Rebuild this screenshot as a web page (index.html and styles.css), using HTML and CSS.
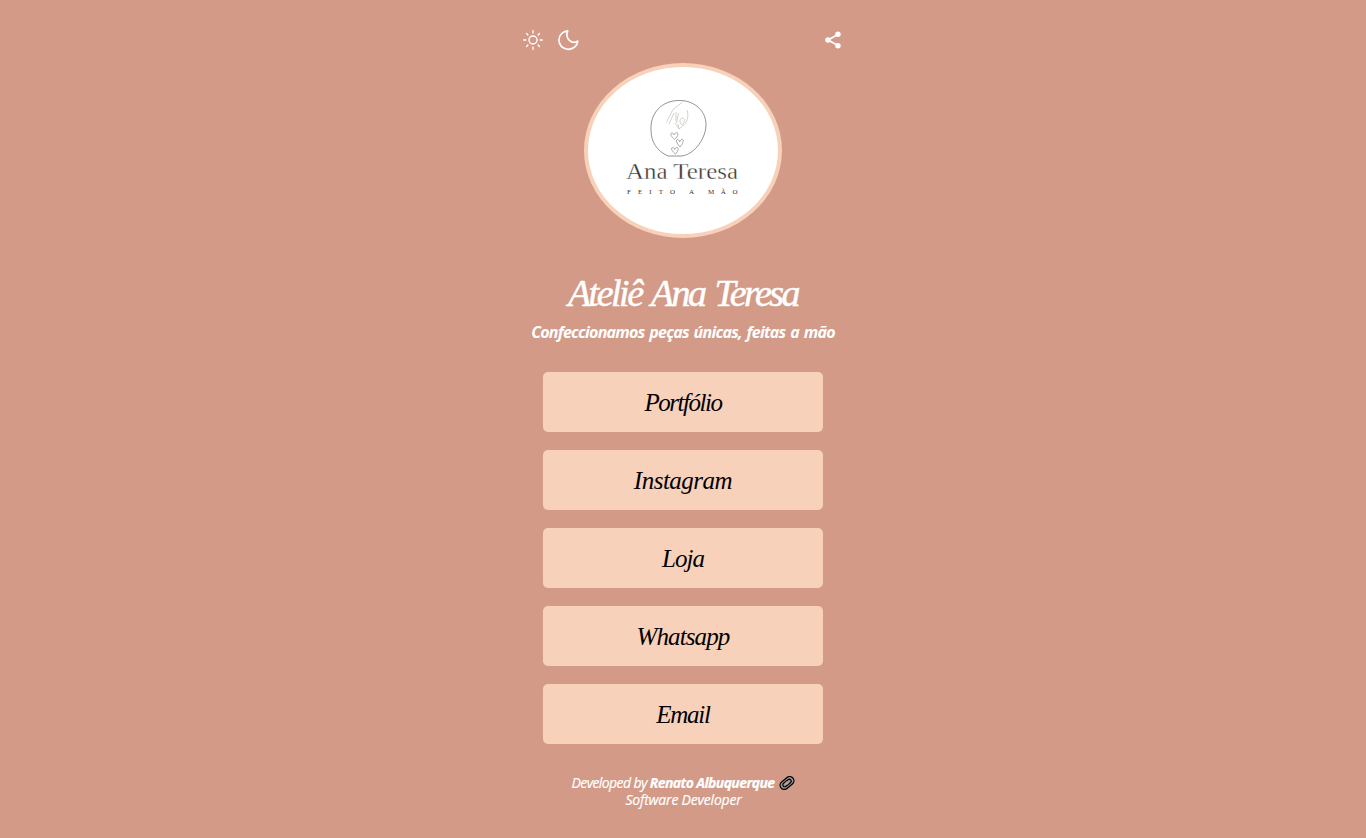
FILE: index.html
```html
<!DOCTYPE html>
<html lang="pt-BR">
<head>
<meta charset="utf-8">
<title>Ateliê Ana Teresa</title>
<link rel="stylesheet" href="styles.css">
</head>
<body>
<main class="page">
  <header class="toolbar">
    <div class="themes">
      <svg class="icon" viewBox="0 0 20 20" fill="none" stroke="currentColor" stroke-width="1.4" stroke-linecap="round"><circle cx="10" cy="10" r="4"/><path d="M10 .7v2.2M10 17.1v2.2M.7 10h2.2M17.1 10h2.2M3.6 3.6l1.3 1.3M15.1 15.1l1.3 1.3M3.600 16.400l1.300-1.300M15.100 4.900l1.300-1.300"/></svg>
      <svg class="icon moon" viewBox="0 0 21 21" fill="none" stroke="currentColor" stroke-width="1.7" stroke-linejoin="round"><path d="M9.700.9C4.800 1.200.9 5.200.9 10.100C.9 15.300 5 19.300 10.200 19.300C15.400 19.300 19.500 15.800 19.800 11C17.500 12.600 14 12.700 11.400 10.400C8.800 8 8.400 4.200 9.700.9Z"/></svg>
    </div>
    <svg class="share" viewBox="0 0 20 20"><path d="M15 4.500 5 10l10 5.500" fill="none" stroke="currentColor" stroke-width="1.700"/><g fill="currentColor"><circle cx="15" cy="4.300" r="2.700"/><circle cx="4.900" cy="10" r="2.700"/><circle cx="15" cy="15.700" r="2.700"/></g></svg>
  </header>
  <div class="avatar">
    <svg viewBox="588 67 190 167" width="190" height="167">
      <path class="ring" d="M679 100.500C693 100 706 110 706 124.500C706 138 695 154 682 156H668C657 151 651 142 651 130C650 113 662 100.500 679 100.500Z"/>
      <path class="hand" d="M683 101.500C679 105 676 107 673 109.500C671 113 669 117 666.500 122.500M674 113L669 124M676 112V121M678.500 113L676.500 123M687 110C689 116 687 122 684 125L679 129L675 123M679 129L678 124M683 118C679 118 679 123 682 125C685 122 685 119 683 118"/>
      <g class="hearts"><path d="M674.500 139.500C672 137 670 134.500 671 133.500C672.500 132 674 134 674 135C675 132.500 677.500 132 678 134C678 136 676 138 674.500 139.500Z"/><path d="M680 147C677.500 144 676 141.500 676.500 140C678 138.500 679.500 140.500 679.700 142C680.500 139 683 138.500 683.300 140.500C683 143 681.500 145.500 680 147Z"/><path d="M675.500 154C673 152 671 149.500 671.500 148.300C673 147 674.500 148 674.700 149.500C675.500 147 678 147 678.300 148.800C678 151 676.500 153 675.500 154Z"/></g>
      <text class="brand" x="626" y="178.500" textLength="112" lengthAdjust="spacingAndGlyphs">Ana Teresa</text>
      <text class="motto" x="627" y="193.700" textLength="48">FEITO</text><text class="motto" x="689" y="193.700">A</text><text class="motto" x="708" y="193.700" textLength="29.500">MÃO</text>
    </svg>
  </div>
  <h1 class="title">Ateliê Ana Teresa</h1>
  <p class="tagline">Confeccionamos peças únicas, feitas a mão</p>
  <nav class="links">
    <a class="link portfolio">Portfólio</a>
    <a class="link instagram">Instagram</a>
    <a class="link">Loja</a>
    <a class="link whatsapp">Whatsapp</a>
    <a class="link email">Email</a>
  </nav>
  <footer class="credits">
    <div class="credit-line"><span>Developed by <b>Renato Albuquerque</b></span><svg class="chain" viewBox="0 0 16 14"><g transform="rotate(-39 8 7)" fill="none"><rect x=".3" y="2.800" width="15.400" height="8.400" rx="4.200" fill="#999" stroke="#000" stroke-width="1.300"/><rect x="3.200" y="5" width="9.600" height="4" rx="2" stroke="#000" stroke-width="1.200"/><circle cx="8" cy="7" r="1.500" fill="#d39a88"/></g></svg></div>
    <div class="role">Software Developer</div>
  </footer>
</main>
</body>
</html>
```
FILE: styles.css
```css
* { box-sizing: border-box; }
body { margin: 0; min-height: 838px; background: #d39a88; color: #fff; font-family: "Liberation Serif", serif; }
.page { width: 320px; margin: 0 auto; padding-top: 30px; display: flex; flex-direction: column; align-items: center; }
.toolbar { width: 100%; height: 20px; display: flex; justify-content: space-between; }
.themes { display: flex; gap: 15px; }
.icon, .share { width: 20px; height: 20px; display: block; }
.moon { width: 21px; height: 21px; }
.avatar { width: 198px; height: 175px; margin-top: 13px; border: 4px solid #f7d1ba; border-radius: 50%; background: #fff; overflow: hidden; }
.avatar svg { display: block; }
.ring { fill: none; stroke: #777; stroke-width: .8; }
.hand { fill: none; stroke: #c0c0b5; stroke-width: .7; }
.hearts { fill: none; stroke: #888; stroke-width: .7; }
.brand { font-size: 24px; fill: #333; stroke: #fff; stroke-width: .35; }
.motto { font-size: 7px; fill: #333; }
.title { margin: 32px 0 0; font-size: 38px; line-height: 46px; font-style: italic; font-weight: 400; letter-spacing: -2.500px; word-spacing: 3px; -webkit-text-stroke: .5px #fff; white-space: nowrap; }
.tagline { margin: 7px 0 0; font: italic 700 16px/18px "Open Sans", sans-serif; letter-spacing: -.75px; word-spacing: 1.400px; white-space: nowrap; }
.links { width: 280px; margin-top: 31px; display: flex; flex-direction: column; gap: 18px; }
.link { height: 60px; display: flex; align-items: center; justify-content: center; padding-top: 1px; border-radius: 5px; background: #f7d1ba; color: #000; font-size: 25px; font-style: italic; letter-spacing: -1px; }
.portfolio { letter-spacing: -1.500px; }
.instagram { letter-spacing: -.5px; }
.whatsapp { letter-spacing: -.9px; }
.email { letter-spacing: -1.200px; }
.credits { margin-top: 30px; font: italic 500 14px/17px "Open Sans", sans-serif; letter-spacing: -.6px; text-align: center; white-space: nowrap; -webkit-text-stroke: .2px #fff; }
.credit-line { display: flex; align-items: center; justify-content: center; gap: 5px; padding-left: 1px; }
.role { letter-spacing: -.2px; padding-left: 1px; }
.chain { width: 16px; height: 14px; }
```
